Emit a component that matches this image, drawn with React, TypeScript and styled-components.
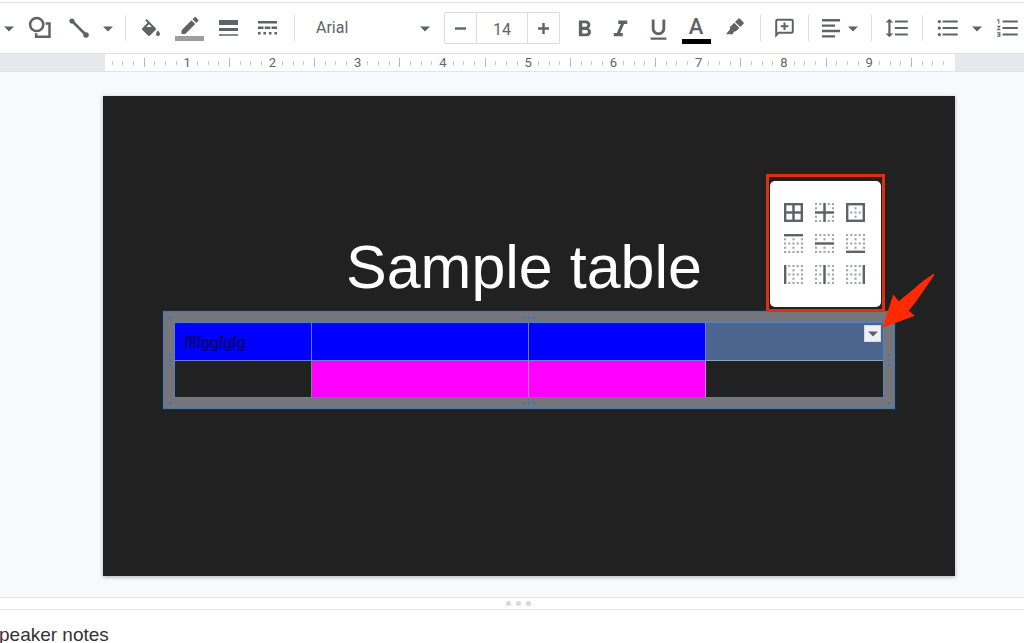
import React from 'react';
import styled, { createGlobalStyle } from 'styled-components';
import {
  MdFormatBold,
  MdFormatItalic,
  MdFormatUnderlined,
  MdFormatLineSpacing,
  MdFormatListBulleted,
  MdFormatListNumbered,
} from 'react-icons/md';

const INK = '#5f6368';

const GlobalStyle = createGlobalStyle`
  *, *::before, *::after { box-sizing: border-box; }
  body { margin: 0; background: #fff; overflow: hidden; }
  button, input, select, textarea { font: inherit; color: inherit; }
  button { border: 0; padding: 0; background: none; cursor: pointer; }
  svg { display: block; flex: none; }
`;

const Page = styled.div`
  display: flex;
  flex-direction: column;
  height: 100vh;
  padding-top: 2px;
  overflow: hidden;
  background: #fff;
  color: ${INK};
  font-family: Roboto, 'Liberation Sans', sans-serif;
`;

/* Toolbar */

const Toolbar = styled.div`
  display: flex;
  align-items: center;
  flex: none;
  height: 52px;
  border-top: 1px solid #e3e3e5;
  border-bottom: 1px solid #dfe1e4;
  overflow: hidden;

  & > * { flex: none; }
`;

const ToolButton = styled.button<{ $width: number; $drop?: number }>`
  display: flex;
  align-items: center;
  justify-content: center;
  gap: 8px;
  width: ${(p) => p.$width}px;
  height: 40px;
  padding-top: ${(p) => p.$drop ?? 0}px;
`;

const SwatchButton = styled(ToolButton)`
  flex-direction: column;
  gap: 2px;
`;

const Swatch = styled.span<{ $color: string }>`
  width: 29px;
  height: 5px;
  background: ${(p) => p.$color};
`;

const Letter = styled.span`
  font-size: 22px;
  font-weight: 500;
  line-height: 20px;
`;

const Divider = styled.span`
  width: 1px;
  height: 26px;
  margin: 0 6px;
  background: #dadce0;
`;

const FontPicker = styled.label`
  display: flex;
  align-items: center;
  width: 137px;
  padding: 0 8px 0 15px;
`;

const FontSelect = styled.select`
  flex: 1;
  min-width: 0;
  height: 30px;
  padding: 0 0 2px;
  border: 0;
  background: none;
  appearance: none;
  font-size: 16px;
`;

const Stepper = styled.div`
  display: flex;
  height: 32px;
  margin: 0 6px;
  border: 1px solid #dadce0;
  border-radius: 2px;
`;

const StepButton = styled.button`
  display: flex;
  align-items: center;
  justify-content: center;
  width: 31px;
`;

const SizeInput = styled.input`
  width: 52px;
  border: solid #dadce0;
  border-width: 0 1px;
  padding: 2px 0 0;
  background: none;
  text-align: center;
  font-size: 16px;
`;

/* Ruler */

const RulerBar = styled.div`
  flex: none;
  padding: 0 69px 0 102px;
  background: #e6e8ec;
  border-bottom: 1px solid #e0e3e8;
`;

const RulerTrack = styled.div`
  display: flex;
  height: 17px;
  background: linear-gradient(to right, #e6e8ec 3px, #fff 3px);
`;

const Eighth = styled.div`
  display: flex;
  flex: 1;
  align-items: center;
  justify-content: flex-end;
`;

const Tick = styled.span<{ $long: boolean }>`
  width: 1px;
  height: ${(p) => (p.$long ? 9 : 4)}px;
  background: ${(p) => (p.$long ? '#b4b6b9' : '#c4c6c9')};
`;

const InchLabel = styled.span`
  display: flex;
  justify-content: center;
  width: 0;
  font-size: 13px;
  line-height: 17px;
`;

/* Canvas */

const Workspace = styled.main`
  flex: none;
  padding: 24px 69px 21px 103px;
  background: #f8f9fd;
`;

const Slide = styled.section`
  position: relative;
  aspect-ratio: 852 / 480;
  padding: 138px 60px 0;
  background: #212121;
  box-shadow: 0 1px 4px rgba(60, 64, 67, 0.4);
  font-family: 'Liberation Sans', Arial, sans-serif;
`;

const SlideTitle = styled.h1`
  margin: 0 10px 11px 0;
  color: #fff;
  font-size: 61px;
  font-weight: 400;
  line-height: 66px;
  text-align: center;
  white-space: nowrap;
`;

const TableFrame = styled.div`
  display: grid;
  grid-template-columns: 11px 1fr 11px;
  grid-template-rows: 11px auto 11px;
  place-items: center;
  border: 1px solid #4c78a8;
  background: #75767c;
  box-shadow: 0 0 0 1px #1b2c42;
`;

const Handle = styled.span<{ $vertical?: boolean }>`
  display: flex;
  flex-direction: ${(p) => (p.$vertical ? 'column' : 'row')};
  gap: 3px;
`;

const HandleDot = styled.i`
  width: 2px;
  height: 2px;
  background: #3a70c4;
`;

const DataTable = styled.table`
  width: 100%;
  table-layout: fixed;
  border-spacing: 0;
  outline: 1px solid #5583bd;
`;

const Cell = styled.td<{ $fill?: string }>`
  position: relative;
  height: 37px;
  padding: 2px 9px 0;
  border: solid rgba(190, 200, 225, 0.6);
  border-width: 0 1px 1px 0;
  background: ${(p) => p.$fill ?? 'transparent'};
  color: #00003c;
  font-size: 16px;
  line-height: 18px;

  &:last-child { border-right: 0; }
  tr:first-child > & { height: 38px; }
  tr:last-child > & { height: 36px; border-bottom: 0; }
`;

const TableRows = styled.tbody`
  background: #212121;
`;

const CellMenuButton = styled.button`
  position: absolute;
  top: 2px;
  right: 2px;
  display: flex;
  align-items: center;
  justify-content: center;
  width: 17px;
  height: 17px;
  border: 1px solid #d5d9e8;
  background: #f0f1f6;
`;

const Callout = styled.div`
  position: absolute;
  top: 78px;
  right: 70px;
  padding: 4px 1px 2px;
  border: 3px solid #dc300f;
`;

const BorderMenu = styled.div`
  display: grid;
  grid-template-columns: repeat(3, 19px);
  place-content: center;
  gap: 12px;
  width: 111px;
  height: 126px;
  padding: 0 2px 2px 0;
  border-radius: 5px;
  background: #fff;
`;

const CalloutArrow = styled.svg`
  position: absolute;
  top: 177px;
  right: 20px;
`;

/* Notes */

const Splitter = styled.div`
  display: flex;
  flex: none;
  align-items: center;
  justify-content: center;
  gap: 5px;
  height: 13px;
  padding: 0 0 1px 12px;
  border: solid #e6e7ea;
  border-width: 1px 0;
`;

const SplitterDot = styled.i`
  width: 5px;
  height: 5px;
  border-radius: 50%;
  background: #d8d8d8;
`;

const Notes = styled.textarea`
  flex: 1;
  min-height: 0;
  margin-left: -1px;
  padding: 14px 0 0;
  border: 0;
  outline: 0;
  resize: none;
  overflow: hidden;
  background: none;
  color: #333;
  font-family: 'Liberation Sans', Arial, sans-serif;
  font-size: 19px;
  line-height: 22px;
`;

/* Icons */

const Caret = () => (
  <svg width="10" height="7" viewBox="0 0 10 7" fill={INK} aria-hidden="true">
    <path d="M0 1.5h10L5 6.5z" />
  </svg>
);

const ShapeIcon = () => (
  <svg width="24" height="24" viewBox="0 0 24 24" fill="none" stroke={INK} strokeWidth="2.5" aria-hidden="true">
    <circle cx="8.7" cy="8.5" r="6.6" />
    <path d="M17.600 7.600h3.900v13.200H8.100v-3.600" />
  </svg>
);

const LineIcon = () => (
  <svg width="20" height="20" viewBox="0 0 20 20" fill={INK} aria-hidden="true">
    <path d="M3 3l14 14" stroke={INK} strokeWidth="2.6" />
    <circle cx="3" cy="3" r="2.6" />
    <circle cx="17" cy="17" r="2.8" />
  </svg>
);

const FillIcon = () => (
  <svg width="24" height="22" viewBox="0 0 24 22" fill={INK} aria-hidden="true">
    <path
      transform="translate(0 2)"
      d="M16.56 8.94L7.62 0 6.21 1.41l2.38 2.38-5.15 5.15c-.59.59-.59 1.54 0 2.12l5.5 5.5c.29.29.68.44 1.06.44s.77-.15 1.06-.44l5.5-5.5c.59-.58.59-1.53 0-2.12zM7.2 8L10 5.210 12.800 8H7.200zM19 11.500s-2 2.170-2 3.500c0 1.100.9 2 2 2s2-.9 2-2c0-1.330-2-3.500-2-3.500z"
    />
  </svg>
);

const PencilIcon = () => (
  <svg width="18" height="17" viewBox="3.500 0 18 17" fill={INK} aria-hidden="true">
    <path d="M17.75 7L14 3.25l-10 10V17h3.75l10-10zm2.96-2.96c.39-.39.39-1.02 0-1.41L18.37.29c-.39-.39-1.02-.39-1.41 0L15 2.25 18.75 6l1.96-1.96z" />
  </svg>
);

const WeightIcon = () => (
  <svg width="20" height="16" viewBox="0 0 20 16" fill={INK} aria-hidden="true">
    <path d="M0 0h19v5H0zM0 8h19v3H0zM0 14.300h19v1.400H0z" />
  </svg>
);

const DashIcon = () => (
  <svg width="20" height="14" viewBox="0 0 20 14" fill={INK} aria-hidden="true">
    <path d="M0 0h19v2.400H0zM0 5.500h5.500v2.400H0zM6.800 5.500h5.500v2.400H6.800zM13.500 5.500H19v2.400h-5.500z" />
    <path d="M0 11h2.600v2.400H0zM5.400 11H8v2.400H5.400zM10.900 11h2.600v2.400h-2.600zM16.400 11H19v2.400h-2.600z" />
  </svg>
);

const MarkerIcon = () => (
  <svg width="18" height="20" viewBox="0 0 18 20" fill={INK} aria-hidden="true">
    <path d="M12.200.8c.5-.5 1.200-.5 1.700 0l3.500 3.500c.5.5.5 1.200 0 1.700l-3.100 3.100L9.100 3.900z" />
    <path d="M8.300 4.800l5.100 5.100-3.200 3.200c-.5.5-1.300.5-1.800.1l-.7.8-.9 2.200H0l4.200-5.300c-.5-.8-.4-1.900.3-2.500z" />
  </svg>
);

const CommentIcon = () => (
  <svg width="19" height="20" viewBox="0 0 19 20" fill="none" stroke={INK} strokeWidth="2" aria-hidden="true">
    <path d="M1.200 17.200V3c0-.7.5-1.200 1.200-1.200h14.200c.7 0 1.200.5 1.200 1.200v10.600c0 .7-.5 1.200-1.200 1.200H3.500z" />
    <path d="M9.500 4.500v7.600M5.700 8.300h7.600" />
  </svg>
);

const AlignIcon = () => (
  <svg width="18" height="19" viewBox="0 0 18 19" fill={INK} aria-hidden="true">
    <path d="M0 0h18v2.400H0zM0 5.400h13v2.400H0zM0 10.800h18v2.400H0zM0 16.200h13v2.400H0z" />
  </svg>
);

const MinusIcon = () => (
  <svg width="11" height="11" viewBox="0 0 11 11" aria-hidden="true">
    <path d="M0 5.500h11" stroke={INK} strokeWidth="2.400" />
  </svg>
);

const PlusIcon = () => (
  <svg width="11" height="11" viewBox="0 0 11 11" aria-hidden="true">
    <path d="M0 5.500h11M5.500 0v11" stroke={INK} strokeWidth="2.400" />
  </svg>
);

type Edge = 'top' | 'bottom' | 'left' | 'right' | 'horizontal' | 'vertical';

const edgeRects: Record<Edge, [number, number, number, number]> = {
  top: [0, 0, 18, 2],
  bottom: [0, 16, 18, 2],
  left: [0, 0, 2, 18],
  right: [16, 0, 2, 18],
  horizontal: [0, 8, 18, 2],
  vertical: [8, 0, 2, 18],
};

// Dots mark the cell edges that stay unset; solid bars mark the chosen ones.
const BorderIcon = ({ edges }: { edges: Edge[] }) => {
  const inside = (x: number, y: number) =>
    edges.some((e) => {
      const [ex, ey, w, h] = edgeRects[e];
      return x >= ex && x < ex + w && y >= ey && y < ey + h;
    });
  const stops = [0, 1, 2, 3, 4];
  return (
    <svg width="19" height="19" viewBox="0 0 18 18" aria-hidden="true">
      {stops.flatMap((r) =>
        stops
          .filter((c) => (r % 2 === 0 || c % 2 === 0) && !inside(c * 4, r * 4))
          .map((c) => <rect key={`${r}-${c}`} x={c * 4} y={r * 4} width="2" height="2" fill="#a3a5a8" />),
      )}
      {edges.map((e) => {
        const [x, y, width, height] = edgeRects[e];
        return (
          <rect key={e} x={x} y={y} width={width} height={height} fill={INK} stroke={INK} strokeWidth="0.4" />
        );
      })}
    </svg>
  );
};

const borderChoices: { label: string; edges: Edge[] }[] = [
  { label: 'All borders', edges: ['top', 'bottom', 'left', 'right', 'horizontal', 'vertical'] },
  { label: 'Inner borders', edges: ['horizontal', 'vertical'] },
  { label: 'Outer borders', edges: ['top', 'bottom', 'left', 'right'] },
  { label: 'Top border', edges: ['top'] },
  { label: 'Horizontal borders', edges: ['horizontal'] },
  { label: 'Bottom border', edges: ['bottom'] },
  { label: 'Left border', edges: ['left'] },
  { label: 'Vertical borders', edges: ['vertical'] },
  { label: 'Right border', edges: ['right'] },
];

const DragHandle = ({ dots = 3, vertical }: { dots?: number; vertical?: boolean }) => (
  <Handle $vertical={vertical}>
    {Array.from({ length: dots }, (_, i) => (
      <HandleDot key={i} />
    ))}
  </Handle>
);

const Ruler = () => (
  <RulerBar>
    <RulerTrack>
      {Array.from({ length: 79 }, (_, i) => i + 1).map((n) => (
        <Eighth key={n}>
          {n % 8 === 0 ? <InchLabel>{n / 8}</InchLabel> : <Tick $long={n % 4 === 0} />}
        </Eighth>
      ))}
      <Eighth />
    </RulerTrack>
  </RulerBar>
);

export default function App() {
  return (
    <Page>
      <GlobalStyle />
      <Toolbar role="toolbar" aria-label="Formatting">
        <ToolButton $width={18} aria-label="Image options"><Caret /></ToolButton>
        <ToolButton $width={44} aria-label="Shape"><ShapeIcon /></ToolButton>
        <ToolButton $width={34} aria-label="Line"><LineIcon /></ToolButton>
        <ToolButton $width={23} aria-label="Line options"><Caret /></ToolButton>
        <Divider />
        <ToolButton $width={37} aria-label="Fill color"><FillIcon /></ToolButton>
        <SwatchButton $width={41} $drop={1} aria-label="Border color">
          <PencilIcon />
          <Swatch $color="#9e9e9e" />
        </SwatchButton>
        <ToolButton $width={38} aria-label="Border weight"><WeightIcon /></ToolButton>
        <ToolButton $width={40} aria-label="Border dash"><DashIcon /></ToolButton>
        <Divider />
        <FontPicker>
          <FontSelect aria-label="Font" defaultValue="Arial">
            <option>Arial</option>
          </FontSelect>
          <Caret />
        </FontPicker>
        <Stepper>
          <StepButton aria-label="Decrease font size"><MinusIcon /></StepButton>
          <SizeInput aria-label="Font size" defaultValue="14" />
          <StepButton aria-label="Increase font size"><PlusIcon /></StepButton>
        </Stepper>
        <ToolButton $width={36} $drop={3} aria-label="Bold"><MdFormatBold size={27} /></ToolButton>
        <ToolButton $width={37} $drop={3} aria-label="Italic"><MdFormatItalic size={27} /></ToolButton>
        <ToolButton $width={38} $drop={3} aria-label="Underline"><MdFormatUnderlined size={27} /></ToolButton>
        <SwatchButton $width={38} $drop={4} aria-label="Text color">
          <Letter>A</Letter>
          <Swatch $color="#000" />
        </SwatchButton>
        <ToolButton $width={39} aria-label="Highlight color"><MarkerIcon /></ToolButton>
        <Divider />
        <ToolButton $width={35} aria-label="Add comment"><CommentIcon /></ToolButton>
        <Divider />
        <ToolButton $width={50} aria-label="Align"><AlignIcon /><Caret /></ToolButton>
        <Divider />
        <ToolButton $width={38} aria-label="Line spacing"><MdFormatLineSpacing size={26} /></ToolButton>
        <Divider />
        <ToolButton $width={38} aria-label="Bulleted list"><MdFormatListBulleted size={26} /></ToolButton>
        <ToolButton $width={20} aria-label="Bulleted list options"><Caret /></ToolButton>
        <ToolButton $width={41} aria-label="Numbered list"><MdFormatListNumbered size={26} /></ToolButton>
      </Toolbar>
      <Ruler />
      <Workspace>
        <Slide>
          <SlideTitle>Sample table</SlideTitle>
          <TableFrame>
            <DragHandle dots={1} />
            <DragHandle />
            <DragHandle dots={1} />
            <DragHandle vertical />
            <DataTable>
              <colgroup>
                <col width="19.35%" />
                <col width="30.65%" />
                <col width="25%" />
                <col width="25%" />
              </colgroup>
              <TableRows>
                <tr>
                  <Cell $fill="#0000ff">ffffggfgfg</Cell>
                  <Cell $fill="#0000ff" />
                  <Cell $fill="#0000ff" />
                  <Cell $fill="#4b658e">
                    <CellMenuButton aria-label="Border selection"><Caret /></CellMenuButton>
                  </Cell>
                </tr>
                <tr>
                  <Cell />
                  <Cell $fill="#ff00ff" />
                  <Cell $fill="#ff00ff" />
                  <Cell />
                </tr>
              </TableRows>
            </DataTable>
            <DragHandle vertical />
            <DragHandle dots={1} />
            <DragHandle />
            <DragHandle dots={1} />
          </TableFrame>
          <Callout>
            <BorderMenu>
              {borderChoices.map(({ label, edges }) => (
                <button key={label} aria-label={label}><BorderIcon edges={edges} /></button>
              ))}
            </BorderMenu>
          </Callout>
          <CalloutArrow width="54" height="56" viewBox="0 0 54 56" fill="#ff2a00" aria-hidden="true">
            <path d="M1.500 54.800L12.300 21.500 17.800 28.200C28 20.500 39 9.500 51.600 1.300 52.800.7 53.600 1.500 53 2.600 45 14 37 27 27.700 37.800L33.800 42.700z" />
          </CalloutArrow>
        </Slide>
      </Workspace>
      <Splitter>
        <SplitterDot />
        <SplitterDot />
        <SplitterDot />
      </Splitter>
      <Notes aria-label="Notes" defaultValue="peaker notes" />
    </Page>
  );
}
